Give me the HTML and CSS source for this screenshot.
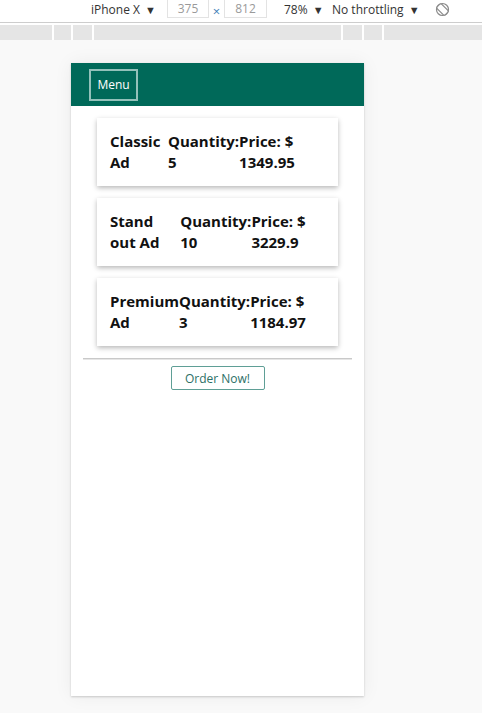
FILE: index.html
```html
<!DOCTYPE html>
<html>
<head>
<meta charset="utf-8">
<link rel="stylesheet" href="styles.css">
</head>
<body>
<div class="toolbar">
  <div class="tb-device">iPhone X <span class="caret">▼</span></div>
  <div class="tb-box">375</div>
  <div class="tb-x">×</div>
  <div class="tb-box tb-box2">812</div>
  <div class="tb-zoom">78% <span class="caret">▼</span></div>
  <div class="tb-throttle">No throttling <span class="caret">▼</span></div>
  <div class="tb-rotate">
    <svg width="15" height="15" viewBox="0 0 15 15">
      <circle cx="7.5" cy="7.5" r="6" fill="none" stroke="#8a8a8a" stroke-width="1.2"/>
      <rect x="4.3" y="1.8" width="6.4" height="11.4" rx="1.6" transform="rotate(-45 7.5 7.5)" fill="#fff" stroke="#8a8a8a" stroke-width="1.2"/>
    </svg>
  </div>
</div>
<div class="ruler-wrap">
  <div class="ruler">
    <div class="seg s1"></div>
    <div class="seg s2"></div>
    <div class="seg s3"></div>
    <div class="seg s4"></div>
    <div class="seg s5"></div>
    <div class="seg s6"></div>
    <div class="seg s7"></div>
  </div>
</div>
<div class="stage">
  <div class="device">
    <header class="app-header">
      <button class="menu-btn">Menu</button>
    </header>
    <div class="cards">
      <div class="card">
        <div class="col">Classic Ad</div>
        <div class="col">Quantity: 5</div>
        <div class="col">Price: $ 1349.95</div>
      </div>
      <div class="card">
        <div class="col">Stand out Ad</div>
        <div class="col">Quantity: 10</div>
        <div class="col">Price: $ 3229.9</div>
      </div>
      <div class="card">
        <div class="col">Premium Ad</div>
        <div class="col">Quantity: 3</div>
        <div class="col">Price: $ 1184.97</div>
      </div>
    </div>
    <hr class="divider">
    <div class="order-row">
      <button class="order-btn">Order Now!</button>
    </div>
  </div>
</div>
</body>
</html>
```
FILE: styles.css
```css
html, body {
  margin: 0;
  padding: 0;
}
body {
  background: #f9f9f9;
  font-family: "Open Sans", "Noto Sans", sans-serif;
  width: 482px;
  height: 713px;
  overflow: hidden;
}
.toolbar {
  height: 23px;
  background: #fff;
  border-bottom: 1px solid #cdcdcd;
  display: flex;
  align-items: center;
  font-size: 12px;
  color: #333;
  box-sizing: border-box;
  padding-bottom: 3px;
}
.caret {
  font-size: 11px;
  margin-left: 2px;
}
.tb-device {
  margin-left: 91px;
  width: 76px;
  white-space: nowrap;
}
.tb-box {
  align-self: flex-start;
  width: 42px;
  height: 18px;
  box-sizing: border-box;
  border: 1px solid #e3e3e3;
  border-top: none;
  color: #9a9a9a;
  text-align: center;
  line-height: 17px;
}
.tb-box2 {
  width: 43px;
}
.tb-x {
  width: 15px;
  text-align: center;
  color: #3f7fb8;
  font-size: 13px;
  padding-top: 3px;
}
.tb-zoom {
  margin-left: 17px;
  width: 48px;
  white-space: nowrap;
}
.tb-throttle {
  width: 103px;
  white-space: nowrap;
}
.tb-rotate {
  display: flex;
  align-items: center;
}
.ruler-wrap {
  background: #fff;
  padding-top: 2px;
}
.ruler {
  display: flex;
  gap: 2px;
  height: 15px;
  background: #fff;
}
.seg {
  background: #e5e5e5;
  height: 15px;
}
.s1 { width: 52px; }
.s2 { width: 17px; }
.s3 { width: 19px; }
.s4 { width: 247px; }
.s5 { width: 19px; }
.s6 { width: 18px; }
.s7 { flex: 1; }
.stage {
  padding-top: 23px;
}
.device {
  margin-left: 71px;
  width: 293px;
  height: 633px;
  background: #fff;
  box-shadow: 0 1px 2px rgba(0, 0, 0, 0.18), 0 0 18px rgba(0, 0, 0, 0.06);
  display: flex;
  flex-direction: column;
}
.app-header {
  height: 43px;
  background: #006959;
  box-sizing: border-box;
  padding: 6px 0 0 18px;
}
.menu-btn {
  display: block;
  width: 49px;
  height: 32px;
  box-sizing: border-box;
  border: 2px solid #93c1ba;
  background: transparent;
  color: #fff;
  font-family: "Open Sans", sans-serif;
  font-size: 12px;
  padding: 0;
  line-height: 28px;
}
.cards {
  display: flex;
  flex-direction: column;
  gap: 12px;
  margin: 12px 26px 0;
}
.card {
  display: flex;
  background: #fff;
  box-shadow: 0 2px 5px rgba(0, 0, 0, 0.28);
  padding: 13px 10px 13px 13px;
  font-size: 15px;
  font-weight: 700;
  line-height: 21px;
  color: #111;
}
.col {
  flex: 0 1 auto;
}
.divider {
  margin: 12px 12px 0;
  border: none;
  border-top: 1px solid #c9c9c9;
  border-bottom: 1px solid #e6e6e6;
  height: 0;
}
.order-row {
  display: flex;
  justify-content: center;
  margin-top: 6px;
}
.order-btn {
  width: 94px;
  height: 24px;
  box-sizing: border-box;
  border: 1px solid #5f9f96;
  border-radius: 2px;
  background: #fff;
  color: #2c6f66;
  font-family: "Open Sans", sans-serif;
  font-size: 12px;
  padding: 0;
}
```
